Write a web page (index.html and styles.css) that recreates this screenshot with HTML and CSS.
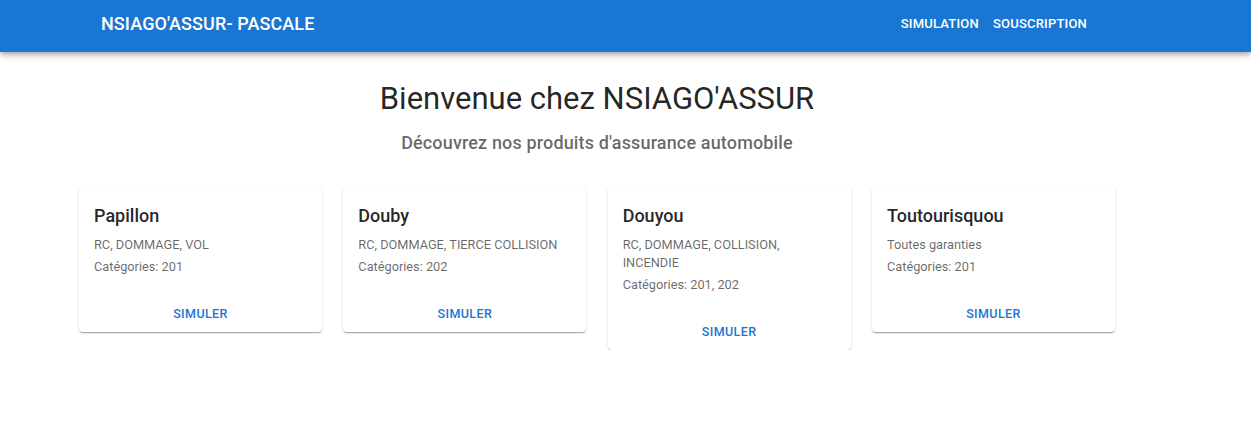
FILE: index.html
```html
<!DOCTYPE html>
<html lang="fr">
<head>
<meta charset="utf-8">
<title>NSIAGO'ASSUR</title>
<link rel="stylesheet" href="styles.css">
</head>
<body>
<header class="appbar">
  <div class="toolbar">
    <div class="brand">NSIAGO'ASSUR- PASCALE</div>
    <nav class="nav">
      <a class="nav-btn" href="#">SIMULATION</a>
      <a class="nav-btn" href="#">SOUSCRIPTION</a>
    </nav>
  </div>
</header>
<main class="page">
  <h1 class="title">Bienvenue chez NSIAGO'ASSUR</h1>
  <h2 class="subtitle">Découvrez nos produits d'assurance automobile</h2>
  <div class="cards">
    <div class="card">
      <div class="card-content">
        <h3 class="card-title">Papillon</h3>
        <p class="card-text">RC, DOMMAGE, VOL</p>
        <p class="card-text">Catégories: 201</p>
      </div>
      <div class="card-actions"><a class="btn" href="#">SIMULER</a></div>
    </div>
    <div class="card">
      <div class="card-content">
        <h3 class="card-title">Douby</h3>
        <p class="card-text">RC, DOMMAGE, TIERCE COLLISION</p>
        <p class="card-text">Catégories: 202</p>
      </div>
      <div class="card-actions"><a class="btn" href="#">SIMULER</a></div>
    </div>
    <div class="card">
      <div class="card-content">
        <h3 class="card-title">Douyou</h3>
        <p class="card-text">RC, DOMMAGE, COLLISION, INCENDIE</p>
        <p class="card-text">Catégories: 201, 202</p>
      </div>
      <div class="card-actions"><a class="btn" href="#">SIMULER</a></div>
    </div>
    <div class="card">
      <div class="card-content">
        <h3 class="card-title">Toutourisquou</h3>
        <p class="card-text">Toutes garanties</p>
        <p class="card-text">Catégories: 201</p>
      </div>
      <div class="card-actions"><a class="btn" href="#">SIMULER</a></div>
    </div>
  </div>
</main>
</body>
</html>
```
FILE: styles.css
```css
* { box-sizing: border-box; }
html, body { margin: 0; padding: 0; background: #fff; }
body {
  font-family: Roboto, "Liberation Sans", Arial, sans-serif;
  color: rgba(0,0,0,0.87);
}
.appbar {
  background: #1976d2;
  color: #fff;
  height: 52px;
  box-shadow: 0px 2px 4px -1px rgba(0,0,0,0.2), 0px 4px 5px 0px rgba(0,0,0,0.14), 0px 1px 10px 0px rgba(0,0,0,0.12);
}
.toolbar {
  width: 1194px;
  height: 52px;
  display: flex;
  align-items: center;
  justify-content: space-between;
  padding: 0 107px 4px 101px;
}
.brand {
  font-size: 18px;
  font-weight: 500;
  letter-spacing: 0.1px;
  line-height: 1.6;
}
.nav { display: flex; gap: 14px; padding-bottom: 2px; }
.nav-btn {
  color: #fff;
  text-decoration: none;
  font-size: 13px;
  font-weight: 500;
  letter-spacing: 0.2px;
}
.page {
  width: 1194px;
  display: flex;
  flex-direction: column;
  align-items: center;
}
.title {
  margin: 28px 0 0;
  font-size: 31px;
  font-weight: 400;
  line-height: 1.235;
}
.subtitle {
  margin: 11px 0 0;
  font-size: 18px;
  font-weight: 500;
  line-height: 1.6;
  letter-spacing: 0.15px;
  color: rgba(0,0,0,0.6);
}
.cards {
  margin-top: 29px;
  display: grid;
  grid-template-columns: repeat(4, 243px);
  column-gap: 21.33px;
  align-items: start;
}
.card {
  background: #fff;
  border-radius: 4px;
  box-shadow: 0px 2px 1px -1px rgba(0,0,0,0.2), 0px 1px 1px 0px rgba(0,0,0,0.14), 0px 1px 3px 0px rgba(0,0,0,0.12);
}
.card-content { padding: 15px 15px 16px; }
.card-title {
  margin: 0 0 5px;
  font-size: 18px;
  font-weight: 500;
  line-height: 1.6;
}
.card-text {
  margin: 0 0 4px;
  font-size: 12.75px;
  line-height: 18px;
  color: rgba(0,0,0,0.6);
}
.card-text:last-child { margin-bottom: 0; }
.card-actions {
  display: flex;
  justify-content: center;
  padding: 8px 8px 4px;
}
.btn {
  color: #1976d2;
  text-decoration: none;
  font-size: 12.5px;
  font-weight: 500;
  letter-spacing: 0.4px;
  line-height: 20px;
  padding: 4px 8px;
}
```
